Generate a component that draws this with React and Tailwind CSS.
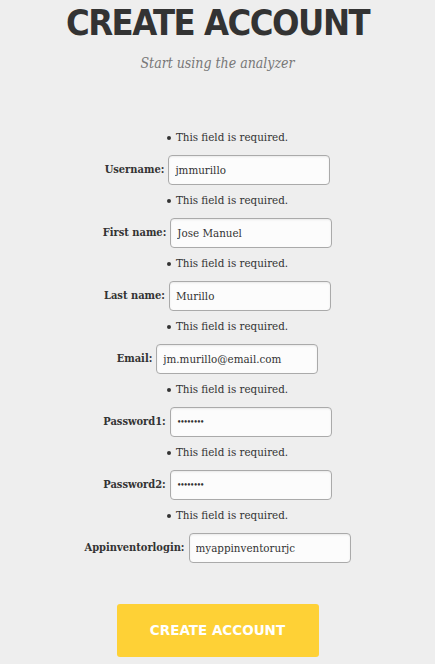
const fields = [
  { label: 'Username:', type: 'text', value: 'jmmurillo' },
  { label: 'First name:', type: 'text', value: 'Jose Manuel' },
  { label: 'Last name:', type: 'text', value: 'Murillo' },
  { label: 'Email:', type: 'text', value: 'jm.murillo@email.com' },
  { label: 'Password1:', type: 'password', value: 'password' },
  { label: 'Password2:', type: 'password', value: 'password' },
  { label: 'Appinventorlogin:', type: 'text', value: 'myappinventorurjc' },
];

const slab = { fontFamily: '"DejaVu Serif Condensed", "DejaVu Serif", serif' };
const heading = { fontFamily: '"DejaVu Sans Condensed", "DejaVu Sans", "Liberation Sans", sans-serif' };

const FieldRow = ({ field }) => (
  <div className="flex flex-col items-center pb-[8px]">
    {/* error list */}
    <div className="h-[16px] flex items-center justify-center pl-[20px] text-[11.5px] text-[#333]">
      <span className="w-[4px] h-[4px] rounded-full bg-[#333] mr-[5px]"></span>
      <span>This field is required.</span>
    </div>
    <div className="mt-[9px] flex items-center gap-[4px]">
      <label className="text-[11px] font-bold text-[#333]">{field.label}</label>
      <input
        type={field.type}
        defaultValue={field.value}
        readOnly
        className={`w-[162px] h-[30px] px-[6px] rounded-[4px] border border-[#aaa] bg-[#fcfcfc] shadow-[inset_0_1px_2px_rgba(0,0,0,0.08)] text-[#333] outline-none ${
          field.type === 'password' ? 'text-[9px] tracking-[-1.5px]' : 'text-[11.5px]'
        }`}
        style={slab}
      />
    </div>
  </div>
);

const App = () => {
  return (
    <div className="min-h-[664px] w-full bg-[#eeeeee] flex flex-col items-center" style={slab}>
      <h2
        className="mt-[1px] text-[36px] leading-[44px] font-bold uppercase text-[#333] tracking-[-1.5px]"
        style={heading}
      >
        Create Account
      </h2>
      <h3 className="mt-[8px] text-[14px] italic text-[#777]">Start using the analyzer</h3>

      <form className="mt-[56px] flex flex-col items-center">
        {fields.map((f) => (
          <FieldRow key={f.label} field={f} />
        ))}
        <button
          type="button"
          className="mt-[33px] w-[202px] h-[53px] rounded-[3px] bg-[#fed136] text-white text-[13.5px] font-bold uppercase"
          style={{ fontFamily: '"DejaVu Sans", "Liberation Sans", sans-serif' }}
        >
          Create Account
        </button>
      </form>
    </div>
  );
};

export default App;
